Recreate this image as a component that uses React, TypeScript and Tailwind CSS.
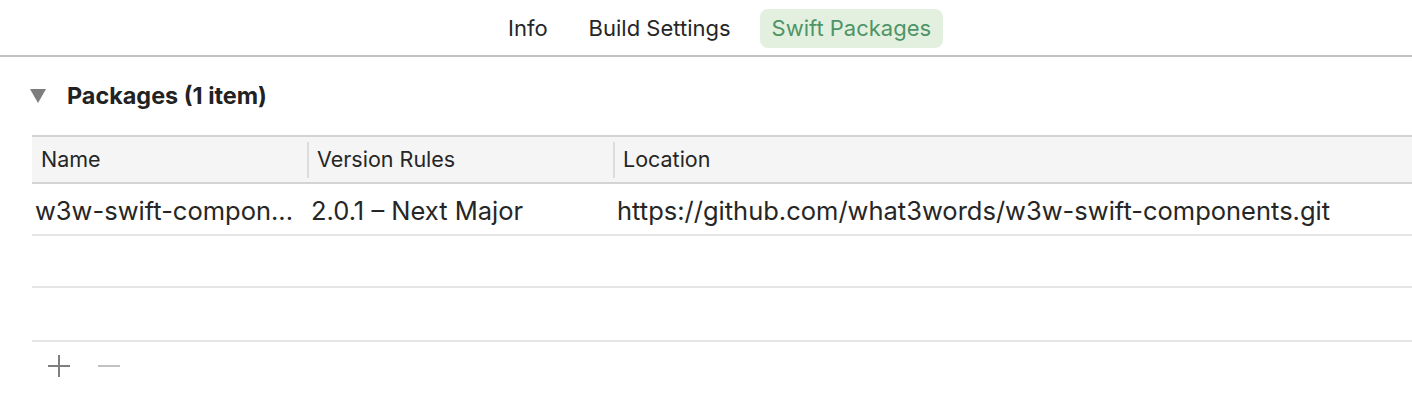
import React from 'react';

const tabs = ['Info', 'Build Settings', 'Swift Packages'];

const columns = [
    { label: 'Name', width: 'w-[275px]' },
    { label: 'Version Rules', width: 'w-[306px]' },
    { label: 'Location', width: 'flex-1' },
];

function Tab({ label, active }: { label: string; active?: boolean }) {
    return (
        <div
            className={`h-[39px] flex items-center px-[12px] rounded-[8px] ${active ? 'bg-[#e3f0df] text-[#4e9466]' : 'text-[#262626]'
                }`}
        >
            {label}
        </div>
    );
}

export default function App() {
    return (
        <div
            className="w-[1412px] h-[404px] bg-white overflow-hidden"
            style={{ fontFamily: 'Inter, "Noto Sans", sans-serif' }}
        >
            {/* Tab bar */}
            <div className="h-[55px] flex pl-[496px] pt-[9px] text-[22px]">
                <div className="flex gap-[17px]">
                    {tabs.map(t => (
                        <Tab key={t} label={t} active={t === 'Swift Packages'} />
                    ))}
                </div>
            </div>
            <div className="h-[2px] bg-[#c3c3c3]" />

            {/* Section header */}
            <div className="flex items-center h-[78px] pl-[30px]">
                <svg width="16" height="14" viewBox="0 0 16 14" className="mr-[21px]">
                    <polygon points="0,0 16,0 8,14" fill="#7d7d7d" />
                </svg>
                <span className="font-bold text-[#222] text-[23.4px]">Packages (1 item)</span>
            </div>

            {/* Table */}
            <div className="ml-[32px]">
                <div className="h-[49px] flex items-center bg-[#f5f5f5] border-y-2 border-[#d3d3d3] text-[#262626] text-[21.5px]">
                    {columns.map((c, i) => (
                        <div key={c.label} className={`${c.width} flex items-center h-full`}>
                            {i > 0 && <div className="w-[2px] h-[36px] bg-[#dcdcdc] mr-[8px]" />}
                            <span className={i === 0 ? 'pl-[9px]' : ''}>{c.label}</span>
                        </div>
                    ))}
                </div>
                <div className="h-[52px] flex items-center pt-[4px] border-b-2 border-[#e6e6e6] text-[#262626] text-[25.5px]">
                    <div className="w-[275px] pl-[3px] whitespace-nowrap">w3w-swift-compon...</div>
                    <div className="w-[306px] pl-[4px] whitespace-nowrap">2.0.1 – Next Major</div>
                    <div className="flex-1 pl-[4px] whitespace-nowrap">
                        https://github.com/what3words/w3w-swift-components.git
                    </div>
                </div>
                <div className="h-[52px] border-b-2 border-[#e6e6e6]" />
                <div className="h-[54px] border-b-2 border-[#e6e6e6]" />

                {/* Add / remove */}
                <div className="flex items-center h-[48px] pl-[16px] gap-[28px]">
                    <svg width="22" height="22" viewBox="0 0 22 22">
                        <rect x="10" y="0" width="2" height="22" fill="#7f7f7f" />
                        <rect x="0" y="10" width="22" height="2" fill="#7f7f7f" />
                    </svg>
                    <svg width="22" height="22" viewBox="0 0 22 22">
                        <rect x="0" y="10" width="22" height="2" fill="#c2c2c2" />
                    </svg>
                </div>
            </div>
        </div>
    );
}
